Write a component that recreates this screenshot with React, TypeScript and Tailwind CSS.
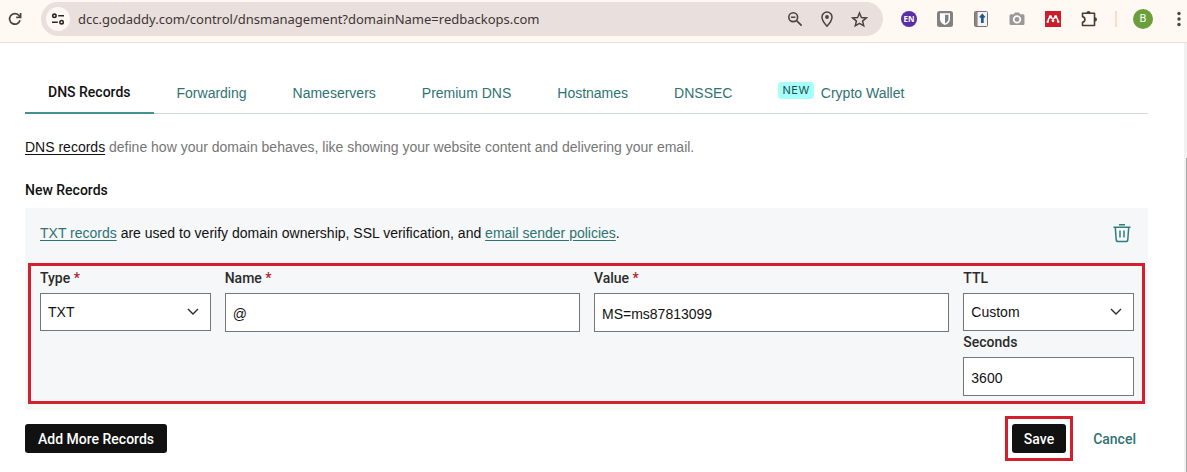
import type { ReactNode } from "react";

const BODY = "font-['Liberation_Sans',Arial,sans-serif]";
const STRONG = "font-['Roboto','Liberation_Sans',sans-serif] font-medium";

const tabs = ["Forwarding", "Nameservers", "Premium DNS", "Hostnames", "DNSSEC"];

function IconButton({ label, narrow, children }: { label: string; narrow?: boolean; children: ReactNode }) {
  return (
    <button
      type="button"
      aria-label={label}
      className={`flex h-5 shrink-0 items-center justify-center ${narrow ? "w-4" : "w-5"}`}
    >
      {children}
    </button>
  );
}

function BrowserBar() {
  return (
    <header className="flex h-[43px] items-center border-b border-[#e9dfdb] bg-[#fff8f3] pb-1">
      <div className="ml-[5px] mr-4">
        <IconButton label="Reload">
          <svg width="16" height="16" viewBox="0 0 16 16" fill="none" stroke="#4b4340" strokeWidth="1.7">
            <path d="M13 9.2A5.3 5.3 0 1 1 11.8 4.3L13.4 6" />
            <path d="M13.6 2v4.4H9.2" />
          </svg>
        </IconButton>
      </div>
      <div className="flex h-[34px] min-w-0 flex-1 items-center rounded-full bg-[#e9dfdd] pl-[5px] pr-[14px]">
        <button
          type="button"
          aria-label="View site information"
          className="flex h-6 w-6 shrink-0 items-center justify-center rounded-full bg-[#fff8f5]"
        >
          <svg width="14" height="14" viewBox="0 0 14 14" fill="none" stroke="#2c2522" strokeWidth="1.6">
            <circle cx="3.4" cy="3.8" r="1.7" />
            <path d="M7.2 3.8H13M1 10.2H6.8" />
            <circle cx="10.6" cy="10.2" r="1.7" />
          </svg>
        </button>
        <input
          aria-label="Address"
          defaultValue="dcc.godaddy.com/control/dnsmanagement?domainName=redbackops.com"
          className="ml-2 min-w-0 flex-1 bg-transparent font-['Noto_Sans','Open_Sans',sans-serif] text-[13px] text-[#3d3634] outline-none"
        />
        <div className="flex items-center gap-3">
          <IconButton label="Zoom">
            <svg width="16" height="16" viewBox="0 0 16 16" fill="none" stroke="#4b4340" strokeWidth="1.6">
              <circle cx="6.2" cy="6.2" r="4.4" />
              <path d="M4 6.2h4.4M9.6 9.6l5 5" />
            </svg>
          </IconButton>
          <IconButton label="Location">
            <svg width="16" height="18" viewBox="0 0 16 18" fill="none" stroke="#4b4340" strokeWidth="1.5">
              <path d="M8 16.2C4.6 12.6 3 9.8 3 7a5 5 0 0 1 10 0c0 2.800-1.600 5.600-5 9.200z" />
              <circle cx="8" cy="7" r="1.9" fill="#4b4340" stroke="none" />
            </svg>
          </IconButton>
          <IconButton label="Bookmark this tab">
            <svg width="17" height="17" viewBox="0 0 17 17" fill="none" stroke="#4b4340" strokeWidth="1.5">
              <path d="M8.500 2l1.900 4.500 4.900.400-3.700 3.200 1.100 4.700-4.200-2.500-4.200 2.500 1.100-4.700L1.700 6.900l4.900-.400z" />
            </svg>
          </IconButton>
        </div>
      </div>
      <div className="ml-4 flex shrink-0 items-center gap-4">
        <IconButton label="Language extension">
          <span className="flex h-4 w-4 items-center justify-center rounded-full bg-[#5a2ea8] font-['Open_Sans',sans-serif] text-[8px] font-bold text-white">
            EN
          </span>
        </IconButton>
        <IconButton label="Password manager">
          <svg width="16" height="16" viewBox="0 0 16 16">
            <rect width="16" height="16" rx="2.500" fill="#828282" />
            <path d="M3 2.300h10v5.900c0 2.700-2 4.400-5 5.900-3-1.500-5-3.200-5-5.900z" fill="#fff" />
            <path d="M8 3.800h3.500v4.500c0 1.700-1.300 2.900-3.500 4.200z" fill="#828282" />
          </svg>
        </IconButton>
        <IconButton label="Reader extension">
          <svg width="14" height="16" viewBox="0 0 14 16">
            <rect x="0.500" y="0.500" width="13" height="15" rx="1" fill="#f2f2f2" stroke="#77706e" />
            <path d="M1 1h2.600v14H1z" fill="#8b8583" />
            <path d="M8.300 2.500l3.200 3.400-1.800 1V12H7V6.900l-1.900-1z" fill="#1e5a8c" />
          </svg>
        </IconButton>
        <IconButton label="Screenshot">
          <svg width="16" height="14" viewBox="0 0 16 14">
            <path
              d="M2 2.200h2.700L6 .6h4l1.300 1.600H14A1.500 1.500 0 0 1 15.500 3.700v7.800A1.500 1.500 0 0 1 14 13H2A1.500 1.500 0 0 1 .5 11.500V3.700A1.500 1.500 0 0 1 2 2.200z"
              fill="#999"
            />
            <circle cx="8" cy="7.400" r="3.300" fill="#999" stroke="#fff8f3" strokeWidth="1.800" />
          </svg>
        </IconButton>
        <IconButton label="Reference manager">
          <svg width="16" height="16" viewBox="0 0 16 16">
            <rect width="16" height="16" fill="#cc1d2b" />
            <g fill="#fff">
              <circle cx="5.400" cy="5.600" r="1.500" />
              <circle cx="10.600" cy="5.600" r="1.500" />
              <circle cx="2.700" cy="10.700" r="1.200" />
              <circle cx="13.300" cy="10.700" r="1.200" />
              <circle cx="8" cy="9.800" r="1.400" />
            </g>
            <path
              d="M3.200 10.600C3.200 8 4 6.400 5.400 6.400S7.200 8 8 8s1.200-1.600 2.600-1.600 2.200 1.600 2.200 4.200"
              fill="none"
              stroke="#fff"
              strokeWidth="1.500"
            />
          </svg>
        </IconButton>
        <IconButton label="Extensions">
          <svg width="18" height="18" viewBox="0 0 18 18" fill="none" stroke="#4b3a30" strokeWidth="1.600">
            <path
              d="M2.500 3.200h12v12.300h-12v-3.300c1.500-.300 2.400-1.300 2.400-2.800S4 6.900 2.500 6.600z"
              strokeLinejoin="round"
            />
            <path d="M6.400 3a2.100 2.100 0 0 1 4.200 0zM14.900 7.300a2.100 2.100 0 0 1 0 4.200z" fill="#4b3a30" stroke="none" />
          </svg>
        </IconButton>
      </div>
      <span className="ml-4 h-4 w-0.5 shrink-0 bg-[#fbdcc8]" />
      <button
        type="button"
        aria-label="Profile"
        className="ml-4 flex h-5 w-5 shrink-0 items-center justify-center rounded-full bg-[#6a9f3c] font-['Roboto',sans-serif] text-[11px] text-white"
      >
        B
      </button>
      <div className="ml-[18px]">
        <IconButton label="Browser menu" narrow>
          <svg width="4" height="16" viewBox="0 0 4 16" fill="#4b4340">
            <circle cx="2" cy="2.500" r="1.700" />
            <circle cx="2" cy="8" r="1.700" />
            <circle cx="2" cy="13.500" r="1.700" />
          </svg>
        </IconButton>
      </div>
    </header>
  );
}

function FieldLabel({ id, required, children }: { id: string; required?: boolean; children: ReactNode }) {
  return (
    <label htmlFor={id} className={`${STRONG} block leading-[18px] text-[#2b2b2b]`}>
      {children}
      {required && <span className="text-[#b3202a]"> *</span>}
    </label>
  );
}

function SelectField({ id, value, options }: { id: string; value: string; options: string[] }) {
  return (
    <div className="relative mt-1.5">
      <select
        id={id}
        defaultValue={value}
        className="h-[38px] w-full appearance-none border border-[#767676] bg-white px-[7px] text-[#111]"
      >
        {options.map((option) => (
          <option key={option}>{option}</option>
        ))}
      </select>
      <svg
        className="pointer-events-none absolute right-3 top-[15px]"
        width="12"
        height="8"
        viewBox="0 0 12 8"
        fill="none"
        stroke="#2b2b2b"
        strokeWidth="1.400"
      >
        <path d="M1 1l5 5 5-5" />
      </svg>
    </div>
  );
}

function TextField({ id, value }: { id: string; value: string }) {
  return (
    <input
      id={id}
      defaultValue={value}
      className="mt-1.5 block h-[39px] w-full border border-[#767676] bg-white px-[7px] pt-0.5 text-[#111]"
    />
  );
}

function TrashIcon() {
  return (
    <svg width="20" height="20" viewBox="0 0 20 20" fill="none" stroke="#2f7f80" strokeWidth="1.500">
      <path d="M7 1.800h6M1.500 4.300h17" />
      <path d="M3.300 4.500l.9 12.100a2 2 0 0 0 2 1.900h7.600a2 2 0 0 0 2-1.900l.9-12.100" />
      <path d="M8 7.500v7M12 7.500v7" />
    </svg>
  );
}

export default function App() {
  return (
    <div className={`${BODY} flex min-h-screen flex-col bg-white text-sm text-[#111]`}>
      <BrowserBar />
      <div className="flex flex-1">
        <main className="min-w-0 flex-1 pb-2.5 pl-[25px] pr-9 pt-7">
          <nav className="flex h-[43px] border-b border-[#d0d7d6]">
            <a href="#dns" className={`${STRONG} -mb-px border-b-2 border-[#42938f] px-[23px] pt-[11px] leading-5`}>
              DNS Records
            </a>
            {tabs.map((tab) => (
              <a key={tab} href="#tab" className="px-[23px] pt-3 leading-5 text-[#2f7373]">
                {tab}
              </a>
            ))}
            <a href="#wallet" className="flex items-start gap-[7px] px-[23px] pt-3 leading-5 text-[#2f7373]">
              <span className="-mt-px rounded bg-[#a6fff8] px-1 font-['Inter',sans-serif] text-[11px] leading-[17px] tracking-wider text-[#1d4f50]">
                NEW
              </span>
              Crypto Wallet
            </a>
          </nav>

          <p className="mt-[23px] leading-5 text-[#767676]">
            <a href="#records" className="text-[#111] underline underline-offset-2">
              DNS records
            </a>{" "}
            define how your domain behaves, like showing your website content and delivering your email.
          </p>
          <h2 className={`${STRONG} mt-[23px] leading-5`}>New Records</h2>

          <section className="mt-2 bg-[#f5f7f8] px-[3px] pb-1.5">
            <div className="flex items-center justify-between px-3 pb-5 pt-[15px]">
              <p className="leading-5">
                <a href="#txt" className="text-[#2f7373] underline underline-offset-2">
                  TXT records
                </a>{" "}
                are used to verify domain ownership, SSL verification, and{" "}
                <a href="#policies" className="text-[#2f7373] underline underline-offset-2">
                  email sender policies
                </a>
                .
              </p>
              <button type="button" aria-label="Delete record" className="mr-px">
                <TrashIcon />
              </button>
            </div>
            <form className="grid grid-cols-12 gap-x-3.5 border-[3px] border-[#d4202c] pb-[5px] pl-[9px] pr-2 pt-[3px]">
              <div className="col-span-2">
                <FieldLabel id="type" required>
                  Type
                </FieldLabel>
                <SelectField id="type" value="TXT" options={["TXT", "A", "CNAME", "MX"]} />
              </div>
              <div className="col-span-4">
                <FieldLabel id="name" required>
                  Name
                </FieldLabel>
                <TextField id="name" value="@" />
              </div>
              <div className="col-span-4">
                <FieldLabel id="value" required>
                  Value
                </FieldLabel>
                <TextField id="value" value="MS=ms87813099" />
              </div>
              <div className="col-span-2">
                <FieldLabel id="ttl">TTL</FieldLabel>
                <SelectField id="ttl" value="Custom" options={["Custom", "1 Hour", "Default"]} />
                <div className="mt-0.5">
                  <FieldLabel id="seconds">Seconds</FieldLabel>
                  <TextField id="seconds" value="3600" />
                </div>
              </div>
            </form>
          </section>

          <div className="mt-1.5 flex items-center">
            <button type="button" className={`${STRONG} h-[29px] rounded-[3px] bg-[#111] px-[13px] text-white`}>
              Add More Records
            </button>
            <div className="ml-auto border-[3px] border-[#d4202c] px-1 py-[5px]">
              <button type="button" className={`${STRONG} block h-[29px] rounded-[3px] bg-[#111] px-3 text-white`}>
                Save
              </button>
            </div>
            <button type="button" className={`${STRONG} ml-5 mr-3 text-[#2f7373]`}>
              Cancel
            </button>
          </div>
        </main>
        <div className="flex w-[3px] flex-col items-end bg-[#f1f1f1] pt-[115px]">
          <div className="w-px flex-1 bg-[#a9a9a9]" />
        </div>
      </div>
    </div>
  );
}
